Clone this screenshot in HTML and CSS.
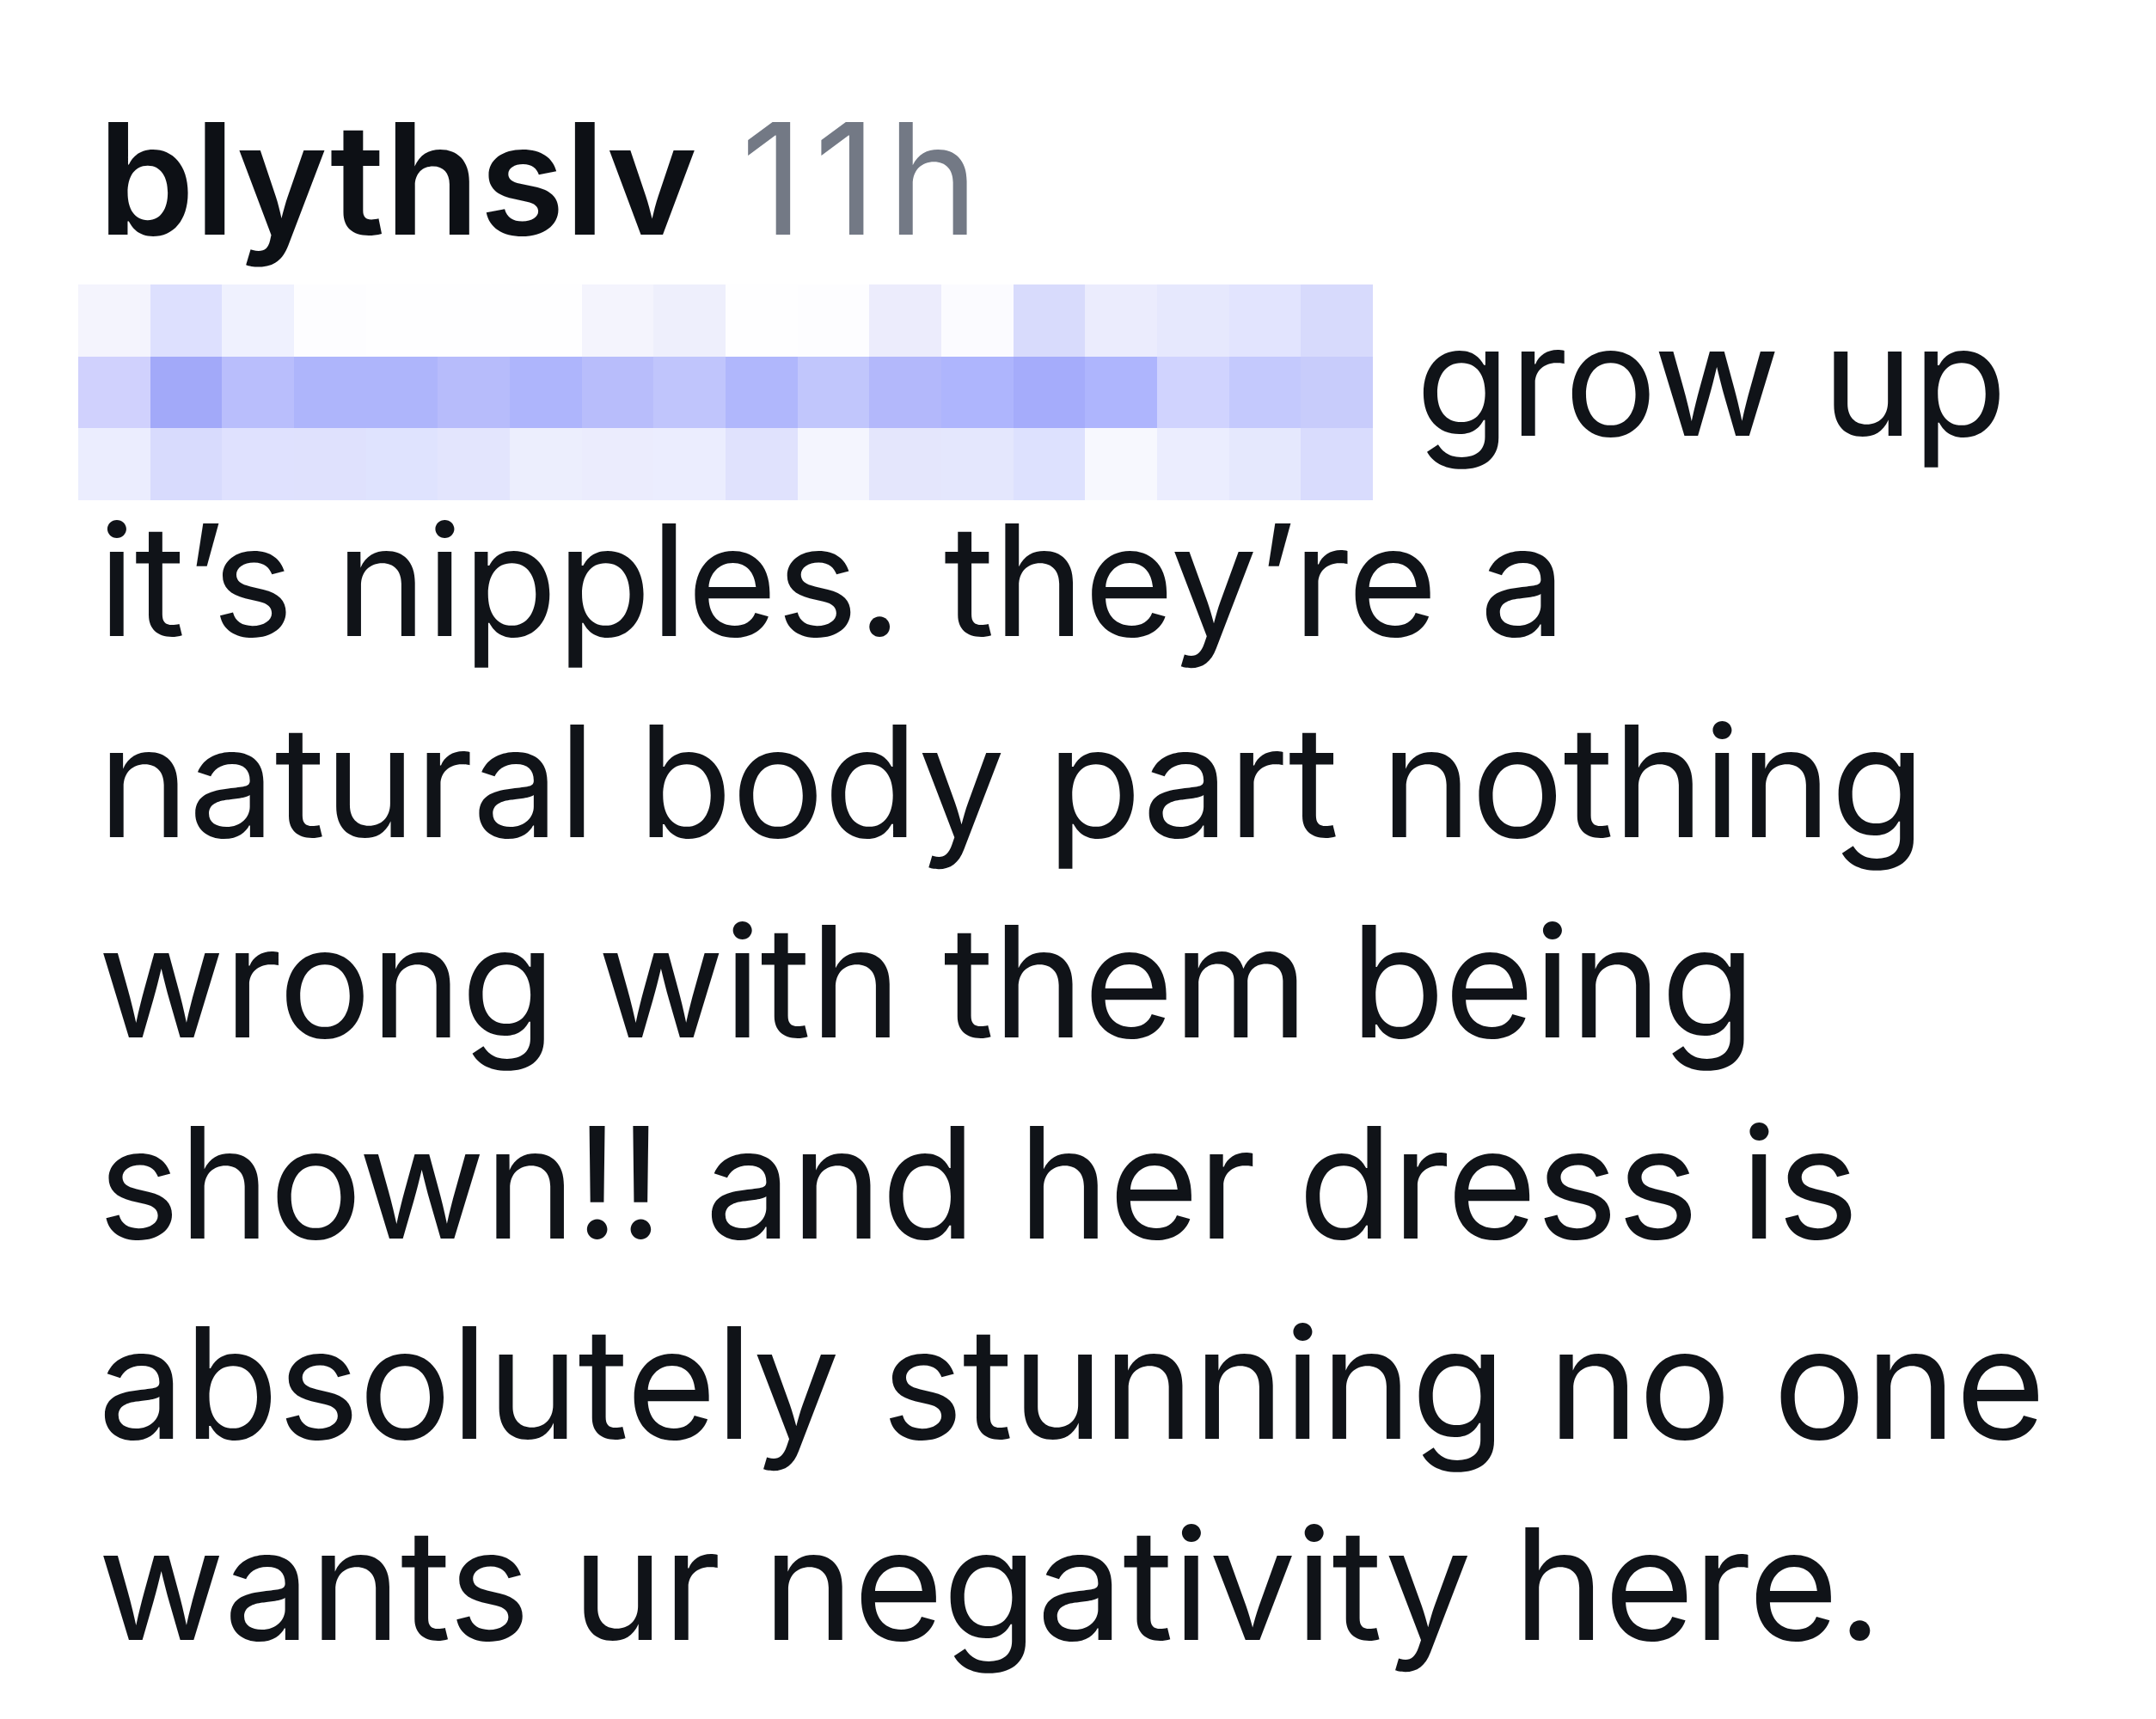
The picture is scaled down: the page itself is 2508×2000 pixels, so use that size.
FILE: index.html
```html
<!DOCTYPE html>
<html lang="en">
<head>
<meta charset="utf-8">
<title>Comment</title>
<link rel="stylesheet" href="styles.css">
</head>
<body>
<div class="comment">
  <p class="line meta"><span class="user">blythslv</span> <span class="time">11h</span></p>
  <p class="line text"><svg class="redact" viewBox="0 0 18 3" preserveAspectRatio="none" shape-rendering="crispEdges" aria-hidden="true">
    <g>
      <rect x="0" y="0" width="1.02" height="1.02" fill="#f4f4fd"/>
      <rect x="1" y="0" width="1.02" height="1.02" fill="#dde0fe"/>
      <rect x="2" y="0" width="1.02" height="1.02" fill="#eff1fe"/>
      <rect x="3" y="0" width="1.02" height="1.02" fill="#fdfdff"/>
      <rect x="4" y="0" width="1.02" height="1.02" fill="#fefeff"/>
      <rect x="5" y="0" width="1.02" height="1.02" fill="#fefeff"/>
      <rect x="6" y="0" width="1.02" height="1.02" fill="#fefeff"/>
      <rect x="7" y="0" width="1.02" height="1.02" fill="#f4f4fd"/>
      <rect x="8" y="0" width="1.02" height="1.02" fill="#eeeffc"/>
      <rect x="9" y="0" width="1.02" height="1.02" fill="#fefeff"/>
      <rect x="10" y="0" width="1.02" height="1.02" fill="#fdfdff"/>
      <rect x="11" y="0" width="1.02" height="1.02" fill="#ececfc"/>
      <rect x="12" y="0" width="1.02" height="1.02" fill="#fbfbff"/>
      <rect x="13" y="0" width="1.02" height="1.02" fill="#d8dbfc"/>
      <rect x="14" y="0" width="1.02" height="1.02" fill="#ebecfd"/>
      <rect x="15" y="0" width="1.02" height="1.02" fill="#e6e8fd"/>
      <rect x="16" y="0" width="1.02" height="1.02" fill="#e2e4fe"/>
      <rect x="17" y="0" width="1" height="1.02" fill="#d7dafc"/>
    </g>
    <g>
      <rect x="0" y="1" width="1.02" height="1.02" fill="#d0d1fd"/>
      <rect x="1" y="1" width="1.02" height="1.02" fill="#a2a9f9"/>
      <rect x="2" y="1" width="1.02" height="1.02" fill="#b9befc"/>
      <rect x="3" y="1" width="1.02" height="1.02" fill="#aeb5fb"/>
      <rect x="4" y="1" width="1.02" height="1.02" fill="#aeb5fb"/>
      <rect x="5" y="1" width="1.02" height="1.02" fill="#b7bcfb"/>
      <rect x="6" y="1" width="1.02" height="1.02" fill="#aeb5fc"/>
      <rect x="7" y="1" width="1.02" height="1.02" fill="#b8bdfb"/>
      <rect x="8" y="1" width="1.02" height="1.02" fill="#c0c5fc"/>
      <rect x="9" y="1" width="1.02" height="1.02" fill="#b0b7fc"/>
      <rect x="10" y="1" width="1.02" height="1.02" fill="#c1c6fc"/>
      <rect x="11" y="1" width="1.02" height="1.02" fill="#b3b8fb"/>
      <rect x="12" y="1" width="1.02" height="1.02" fill="#aeb5fd"/>
      <rect x="13" y="1" width="1.02" height="1.02" fill="#a5acfb"/>
      <rect x="14" y="1" width="1.02" height="1.02" fill="#aeb5fd"/>
      <rect x="15" y="1" width="1.02" height="1.02" fill="#d0d3fe"/>
      <rect x="16" y="1" width="1.02" height="1.02" fill="#c4c9fd"/>
      <rect x="17" y="1" width="1" height="1.02" fill="#c8ccfb"/>
    </g>
    <g>
      <rect x="0" y="2" width="1.02" height="1" fill="#ebedfe"/>
      <rect x="1" y="2" width="1.02" height="1" fill="#d8dbfd"/>
      <rect x="2" y="2" width="1.02" height="1" fill="#dfe1fe"/>
      <rect x="3" y="2" width="1.02" height="1" fill="#dfe1fd"/>
      <rect x="4" y="2" width="1.02" height="1" fill="#dfe3fe"/>
      <rect x="5" y="2" width="1.02" height="1" fill="#e3e5fd"/>
      <rect x="6" y="2" width="1.02" height="1" fill="#eceefd"/>
      <rect x="7" y="2" width="1.02" height="1" fill="#ebecfd"/>
      <rect x="8" y="2" width="1.02" height="1" fill="#ebedfe"/>
      <rect x="9" y="2" width="1.02" height="1" fill="#e0e2fd"/>
      <rect x="10" y="2" width="1.02" height="1" fill="#f4f5fe"/>
      <rect x="11" y="2" width="1.02" height="1" fill="#e4e6fc"/>
      <rect x="12" y="2" width="1.02" height="1" fill="#e4e7fd"/>
      <rect x="13" y="2" width="1.02" height="1" fill="#dde1fe"/>
      <rect x="14" y="2" width="1.02" height="1" fill="#f7f8fe"/>
      <rect x="15" y="2" width="1.02" height="1" fill="#ebedfe"/>
      <rect x="16" y="2" width="1.02" height="1" fill="#e5e8fd"/>
      <rect x="17" y="2" width="1" height="1" fill="#d9dcfd"/>
    </g>
  </svg> grow up it’s nipples. they’re a natural body part nothing wrong with them being shown!! and her dress is absolutely stunning no one wants ur negativity here.</p>
</div>
</body>
</html>
```

FILE: styles.css
```css
html, body {
  margin: 0;
  padding: 0;
  background: #ffffff;
}

body {
  width: 2508px;
  height: 2000px;
  overflow: hidden;
}

.comment {
  padding: 91px 60px 0 114px;
  font-family: Inter, "Noto Sans", "Liberation Sans", sans-serif;
  font-size: 180px;
  line-height: 233.5px;
  color: #101318;
}

.line {
  margin: 0;
}

.user {
  font-weight: 600;
  color: #0d1015;
}

.time {
  color: #737985;
  letter-spacing: 12px;
}

.text {
  letter-spacing: -1px;
}

.redact {
  display: inline-block;
  width: 1506px;
  height: 251px;
  margin-left: -23px;
  margin-bottom: -75px;
  vertical-align: baseline;
}
```
